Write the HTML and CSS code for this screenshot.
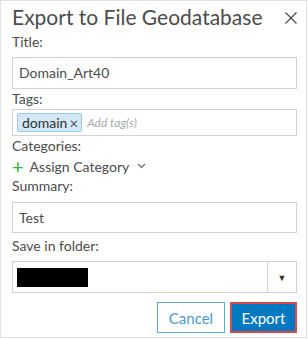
FILE: index.html
```html
<!DOCTYPE html>
<html lang="en">
<head>
  <meta charset="UTF-8" />
  <title>Export to File Geodatabase</title>
  <link rel="stylesheet" href="styles.css">
</head>
<body>
  <div class="dialog">
    <div class="dialog-head">
      <h2>Export to File Geodatabase</h2>
      <span class="close">
        <svg width="12" height="12" viewBox="0 0 12 12"><path d="M0.5 0.5 L11.5 11.5 M11.5 0.5 L0.5 11.5" stroke="#444" stroke-width="1.1" fill="none"/></svg>
      </span>
    </div>

    <label class="lbl">Title:</label>
    <div class="field">Domain_Art40</div>

    <label class="lbl tight">Tags:</label>
    <div class="tags">
      <span class="chip">domain<span class="chip-x">×</span></span>
      <span class="placeholder">Add tag(s)</span>
    </div>

    <label class="lbl tight">Categories:</label>
    <div class="assign">
      <span class="plus">+</span> Assign Category
      <svg class="chev" width="9" height="6" viewBox="0 0 9 6"><path d="M1 1 L4.5 4.5 L8 1" stroke="#666" stroke-width="1.1" fill="none"/></svg>
    </div>

    <label class="lbl tight">Summary:</label>
    <div class="field summary">Test</div>

    <label class="lbl">Save in folder:</label>
    <div class="select">
      <div class="select-val"><span class="redacted"></span></div>
      <div class="select-arrow">▼</div>
    </div>

    <div class="actions">
      <button class="btn btn-cancel">Cancel</button>
      <button class="btn btn-export">Export</button>
    </div>
  </div>
</body>
</html>
```

FILE: styles.css
```css
body {
  margin: 0;
  font-family: 'Lato', 'Open Sans', sans-serif;
  color: #4c4c4c;
  background: #fff;
}

.dialog {
  box-sizing: border-box;
  width: 307px;
  height: 338px;
  border: 1px solid #e2e2e2;
  padding: 0 9px 0 11px;
}

.dialog-head {
  display: flex;
  justify-content: space-between;
  align-items: flex-start;
  height: 31px;
}

.dialog-head h2 {
  margin: 0;
  padding-top: 2px;
  font-size: 21px;
  font-weight: 400;
  line-height: 28px;
  color: #4c4c4c;
}

.close {
  padding-top: 7px;
}

.lbl {
  display: block;
  font-size: 14px;
  line-height: 20px;
  margin-bottom: 5px;
}

.lbl.tight {
  margin-bottom: 0;
}

.field {
  box-sizing: border-box;
  height: 32px;
  border: 1px solid #d2d2d2;
  padding: 0 6px;
  font-size: 14px;
  line-height: 30px;
  color: #4c4c4c;
}

.tags {
  box-sizing: border-box;
  height: 27px;
  border: 1px solid #d2d2d2;
  padding: 3px 4px;
  display: flex;
  align-items: center;
  gap: 5px;
}

.chip {
  display: inline-flex;
  align-items: center;
  height: 19px;
  box-sizing: border-box;
  padding: 0 3px 0 4px;
  background: #d2e8f7;
  border: 1px solid #9fcbeb;
  border-radius: 2px;
  font-size: 14px;
  color: #323232;
}

.chip-x {
  margin-left: 2px;
  font-size: 15px;
  color: #555;
}

.placeholder {
  font-size: 12px;
  font-style: italic;
  color: #aaa;
}

.assign {
  display: flex;
  align-items: center;
  height: 20px;
  font-size: 14px;
}

.plus {
  color: #35ac46;
  font-size: 20px;
  margin-right: 6px;
  line-height: 20px;
}

.chev {
  margin-left: 8px;
}

.field.summary {
  height: 31px;
  margin-top: 6px;
  margin-bottom: 3px;
}

.select {
  display: flex;
  box-sizing: border-box;
  height: 32px;
  border: 1px solid #d2d2d2;
}

.select-val {
  flex: 1;
  padding: 2px 4px;
  display: flex;
  align-items: center;
}

.redacted {
  width: 71px;
  height: 19px;
  background: #000;
}

.select-arrow {
  width: 28px;
  border-left: 1px solid #d2d2d2;
  display: flex;
  align-items: center;
  justify-content: center;
  font-size: 9px;
  color: #333;
}

.actions {
  display: flex;
  justify-content: flex-end;
  gap: 5px;
  margin-top: 9px;
}

.btn {
  box-sizing: border-box;
  height: 31px;
  font-family: 'Lato', 'Open Sans', sans-serif;
  font-size: 15px;
  padding: 0;
  cursor: pointer;
}

.btn-cancel {
  width: 68px;
  background: #fff;
  border: 1px solid #5ea9dc;
  color: #4a9ad4;
}

.btn-export {
  width: 67px;
  background: #0079c1;
  border: 2px solid #e04848;
  color: #fff;
}
```
